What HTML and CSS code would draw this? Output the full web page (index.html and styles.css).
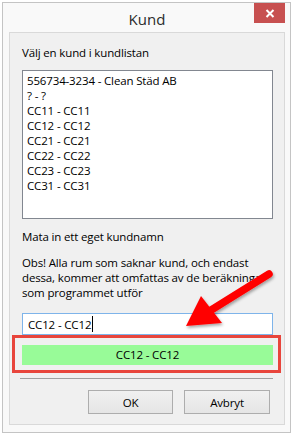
FILE: index.html
```html
<!DOCTYPE html>
<html lang="sv">
<head>
  <meta charset="UTF-8" />
  <meta name="viewport" content="width=device-width, initial-scale=1.0"/>
  <title>Kund</title>
  <link rel="stylesheet" href="styles.css">
</head>
<body>
  <div class="window">
    <div class="titlebar">
      <span></span>
      <span class="title">Kund</span>
      <button class="close-btn" aria-label="Stäng">
        <svg width="10" height="9" viewBox="0 0 10 9">
          <path d="M1.5 1 L8.5 8 M8.5 1 L1.5 8" stroke="#fff" stroke-width="2" fill="none"/>
        </svg>
      </button>
    </div>

    <div class="client">
      <p class="label">Välj en kund i kundlistan</p>
      <ul class="listbox">
        <li>556734-3234 - Clean Städ AB</li>
        <li>? - ?</li>
        <li>CC11 - CC11</li>
        <li>CC12 - CC12</li>
        <li>CC21 - CC21</li>
        <li>CC22 - CC22</li>
        <li>CC23 - CC23</li>
        <li>CC31 - CC31</li>
      </ul>

      <p class="label own">Mata in ett eget kundnamn</p>
      <p class="label note">Obs! Alla rum som saknar kund, och endast<br>dessa, kommer att omfattas av de beräkningar<br>som programmet utför</p>

      <div class="textbox">CC12 - CC12<span class="caret"></span></div>

      <div class="highlight">
        <div class="result">CC12 - CC12</div>
      </div>

      <hr class="separator">

      <div class="buttons">
        <button class="btn">OK</button>
        <button class="btn">Avbryt</button>
      </div>
    </div>
  </div>

  <!-- red annotation arrow drawn over the dialog -->
  <svg class="arrow" width="294" height="435" viewBox="0 0 294 435">
    <defs>
      <filter id="shadow" x="-20%" y="-20%" width="140%" height="140%">
        <feDropShadow dx="1" dy="2" stdDeviation="1.5" flood-color="#000" flood-opacity="0.35"/>
      </filter>
    </defs>
    <g filter="url(#shadow)" fill="#f00">
      <line x1="269" y1="274" x2="208" y2="312" stroke="#f00" stroke-width="7.5" stroke-linecap="round"/>
      <polygon points="186,326 201,296 222,323"/>
    </g>
  </svg>
</body>
</html>
```

FILE: styles.css
```css
* {
  margin: 0;
  padding: 0;
  box-sizing: border-box;
}

body {
  position: relative;
  font-family: 'Open Sans', 'Noto Sans', sans-serif;
  font-size: 11.5px;
  letter-spacing: -0.15px;
  line-height: 15px;
  color: #000;
  background: #fff;
  width: 294px;
  height: 435px;
  overflow: hidden;
}

.window {
  margin: 2px;
  width: 289px;
  height: 431px;
  border: 1px solid #c4c4c4;
  background: #f9f9f9;
  padding: 0 5px 7px 6px;
  display: flex;
  flex-direction: column;
}

.titlebar {
  height: 29px;
  display: grid;
  grid-template-columns: 1fr auto 1fr;
  align-items: start;
}

.title {
  font-size: 15px;
  letter-spacing: 0;
  line-height: 20px;
  margin-top: 6px;
  color: #2b2b2b;
}

.close-btn {
  justify-self: end;
  width: 31px;
  height: 20px;
  border: none;
  background: #c75050;
  display: flex;
  align-items: center;
  justify-content: center;
}

.client {
  flex: 1;
  border: 1px solid #d9d9d9;
  background: #f0f0f0;
  padding: 12px 11px 0 12px;
  display: flex;
  flex-direction: column;
}

.label {
  color: #000;
}

.listbox {
  list-style: none;
  margin-top: 10px;
  height: 149px;
  background: #fff;
  border: 1px solid #828790;
  padding: 2px 4px;
}

.own {
  margin-top: 10px;
}

.note {
  margin-top: 11px;
  white-space: nowrap;
  overflow: hidden;
}

.textbox {
  margin-top: 13px;
  height: 22px;
  background: #fff;
  border: 1px solid #7eb4ea;
  padding: 2px 5px;
  display: flex;
  align-items: center;
}

.caret {
  display: inline-block;
  width: 1px;
  height: 16px;
  background: #000;
  margin-left: 1px;
}

.highlight {
  margin: 0 -8px 0 -10px;
  border: 3px solid #e8453c;
  padding: 7px 5px 5px 7px;
}

.result {
  height: 20px;
  background: #98fb98;
  text-align: center;
  line-height: 20px;
}

.separator {
  margin: 5px 0 0 -2px;
  border: none;
  border-top: 1px solid #a0a0a0;
}

.buttons {
  margin-top: 11px;
  display: flex;
  justify-content: flex-end;
  gap: 11px;
  padding-right: 3px;
}

.btn {
  font-family: inherit;
  font-size: 11.5px;
  letter-spacing: -0.15px;
  width: 85px;
  height: 24px;
  border: 1px solid #adadad;
  background: linear-gradient(#f0f0f0, #e5e5e5);
  color: #000;
}

.btn + .btn {
  width: 86px;
}

.arrow {
  position: absolute;
  left: 0;
  top: 0;
  pointer-events: none;
}
```
